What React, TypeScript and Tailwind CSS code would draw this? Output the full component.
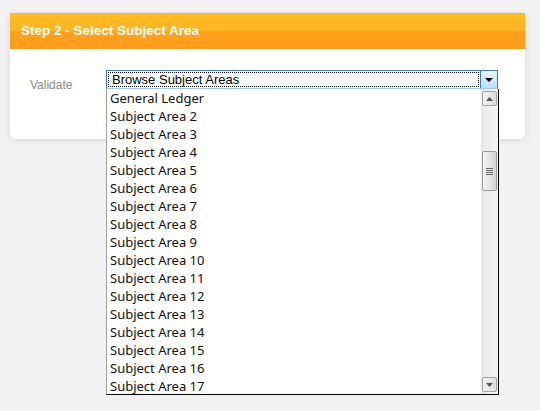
import React from 'react';

const items = ['General Ledger', ...Array.from({ length: 16 }, (_, i) => `Subject Area ${i + 2}`)];

function ScrollArrow({ up }: { up: boolean }) {
  return (
    <div className="flex h-[15px] w-[15px] items-center justify-center rounded-[2px] border border-[#a3a3a3] bg-gradient-to-r from-[#f2f2f2] to-[#dcdcdc]">
      <svg width="7" height="4" viewBox="0 0 7 4">
        {up ? <path d="M3.5 0 L7 4 L0 4 Z" fill="#555" /> : <path d="M0 0 L7 0 L3.5 4 Z" fill="#555" />}
      </svg>
    </div>
  );
}

function SubjectAreaList() {
  return (
    <div className="absolute left-0 top-[19px] z-10 flex h-[306px] w-[393px] overflow-hidden border border-t-0 border-black border-l-[#a0a0a0] bg-white">
      <ul className="flex-1 pl-[3px] font-['Noto_Sans',sans-serif] text-[13px] leading-[18px] text-[#111]">
        {items.map((item) => (
          <li key={item} className="h-[18px] whitespace-nowrap">
            {item}
          </li>
        ))}
      </ul>
      <div className="flex w-[17px] flex-col items-center bg-gradient-to-r from-[#e8e8e8] to-[#f4f4f4] py-[2px]">
        <ScrollArrow up />
        <div className="mt-[45px] flex h-[40px] w-[15px] flex-col items-center justify-center gap-[1px] rounded-[2px] border border-[#9a9a9a] bg-gradient-to-r from-[#f4f4f4] via-[#e6e6e6] to-[#d4d4d4]">
          <span className="h-[1px] w-[7px] bg-[#666]" />
          <span className="h-[1px] w-[7px] bg-[#666]" />
          <span className="h-[1px] w-[7px] bg-[#666]" />
          <span className="h-[1px] w-[7px] bg-[#666]" />
        </div>
        <div className="flex-1" />
        <ScrollArrow up={false} />
      </div>
    </div>
  );
}

export default function App() {
  return (
    <div className="min-h-[411px] bg-[#f2f2f2] pl-[10px] pt-[13px] font-['Liberation_Sans',Arial,sans-serif]">
      <div className="w-[515px] rounded-b-[5px] bg-white shadow-[0_1px_6px_rgba(0,0,0,0.12)]">
        <div className="flex h-[36px] items-center bg-[linear-gradient(#ffbb27_0%,#ffb522_50%,#ffa11d_50%,#ff9c1c_100%)] pl-[11px] text-[13.5px] font-bold text-white">
          Step 2 - Select Subject Area
        </div>
        <div className="flex h-[90px] items-start pl-[20px] pt-[21px]">
          <label className="mt-[6px] w-[76px] text-[12px] text-[#8a8a8a]">Validate</label>
          <div className="relative">
            <div className="flex h-[19px] w-[392px] border border-[#3c7fb1] border-b-[#a9c9e2] bg-white">
              <div className="m-[1px] flex flex-1 items-center border border-dotted border-black pl-[3px] text-[13px] leading-none text-black">
                Browse Subject Areas
              </div>
              <div className="flex w-[17px] items-center justify-center border-l border-[#3c7fb1] bg-gradient-to-b from-[#e8f5fd] to-[#b6e1fb]">
                <svg width="8" height="4" viewBox="0 0 8 4">
                  <path d="M0 0 L8 0 L4 4 Z" fill="#000" />
                </svg>
              </div>
            </div>
            <SubjectAreaList />
          </div>
        </div>
      </div>
    </div>
  );
}
